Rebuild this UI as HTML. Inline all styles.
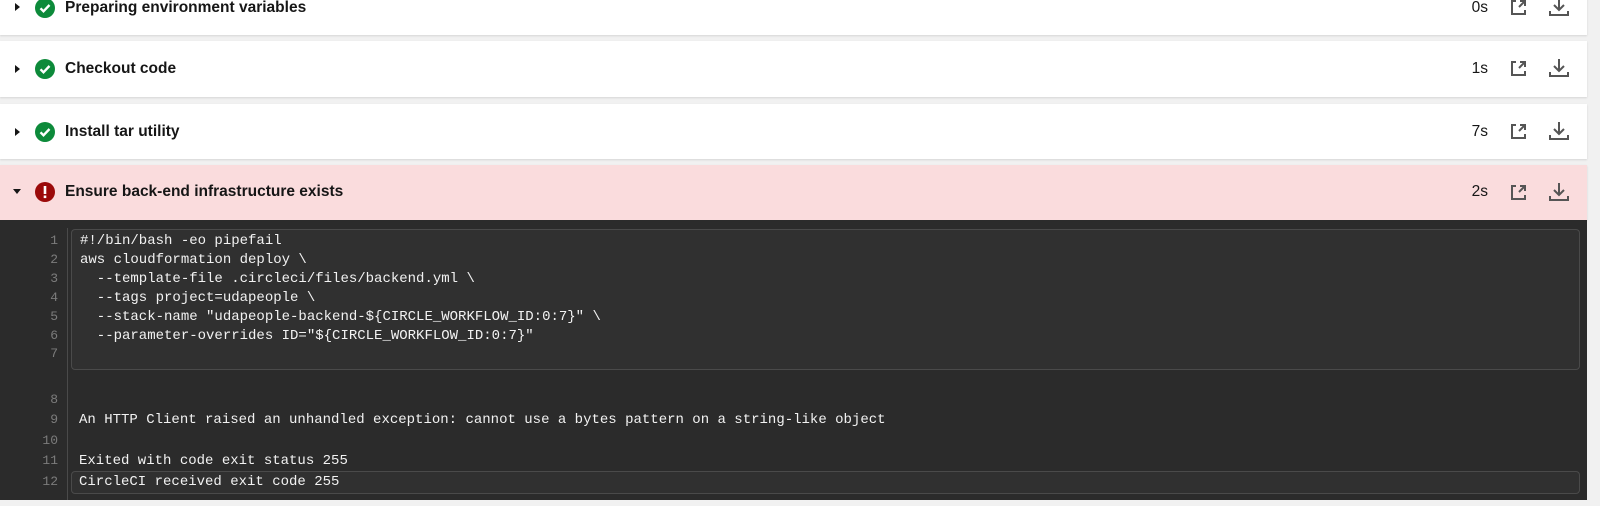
<!DOCTYPE html>
<html><head><style>
body{margin:0;width:1600px;height:506px;background:#f1f1f1;overflow:hidden;font-family:"Liberation Sans",sans-serif;position:relative}
.card{position:absolute;left:0;width:1587px;background:#fff;box-shadow:0 1px 2px rgba(0,0,0,.12)}
.card .t{position:absolute;left:65px;font-weight:bold;font-size:15.5px;color:#161616}
.tri{position:absolute;left:15px;width:0;height:0;border-top:4px solid transparent;border-bottom:4px solid transparent;border-left:5px solid #161616}
.ic{position:absolute;left:35px;width:20px;height:20px}
.dur{position:absolute;right:99px;font-size:15.5px;color:#161616}
.ext{position:absolute;left:1509px}
.dl{position:absolute;left:1549px}
.dark{position:absolute;left:0;top:220px;width:1587px;height:280px;background:#2b2b2b}
.code{font-family:"Liberation Mono",monospace;font-size:14px;color:#f2f2f2;white-space:pre}
.ln{position:absolute;width:58px;text-align:right;color:#7c7c7c;font-family:"Liberation Mono",monospace;font-size:13px}
.box{position:absolute;border:1px solid #4a4a4a;border-radius:4px;background:#303030}
</style></head><body>
<svg width="0" height="0" style="position:absolute"><defs>
<g id="ok"><circle cx="10" cy="10" r="10" fill="#0d8a3a"/><path d="M5.5 10.3l3 3 6-6.3" stroke="#fff" stroke-width="2.4" fill="none"/></g>
<g id="ex"><path d="M7 3H3v13h13v-4" stroke="#555" stroke-width="2" fill="none"/><path d="M10 9l6-6M11 3h5v5" stroke="#555" stroke-width="2" fill="none"/></g>
<g id="dn"><path d="M10 1v12M5 8l5 5 5-5" stroke="#555" stroke-width="2" fill="none"/><path d="M1 14v4h18v-4" stroke="#555" stroke-width="2" fill="none"/></g>
</defs></svg>

<div class="card" style="top:-20px;height:55px">
<div class="tri" style="top:23px"></div><svg class="ic" style="top:18px"><use href="#ok"/></svg>
<div class="t" style="top:19px">Preparing environment variables</div>
<div class="dur" style="top:19px">0s</div>
<svg class="ext" style="top:18px" width="20" height="20"><use href="#ex"/></svg><svg class="dl" style="top:17px" width="20" height="20"><use href="#dn"/></svg>
</div>
<div class="card" style="top:41px;height:56px">
<div class="tri" style="top:24px"></div><svg class="ic" style="top:18px"><use href="#ok"/></svg>
<div class="t" style="top:19px">Checkout code</div>
<div class="dur" style="top:19px">1s</div>
<svg class="ext" style="top:18px" width="20" height="20"><use href="#ex"/></svg><svg class="dl" style="top:17px" width="20" height="20"><use href="#dn"/></svg>
</div>
<div class="card" style="top:104px;height:55px">
<div class="tri" style="top:24px"></div><svg class="ic" style="top:18px"><use href="#ok"/></svg>
<div class="t" style="top:19px">Install tar utility</div>
<div class="dur" style="top:19px">7s</div>
<svg class="ext" style="top:18px" width="20" height="20"><use href="#ex"/></svg><svg class="dl" style="top:17px" width="20" height="20"><use href="#dn"/></svg>
</div>
<div class="card" style="top:165px;height:55px;background:#fadcdd">
<div class="tri" style="top:24px;border-left:4px solid transparent;border-right:4px solid transparent;border-top:5px solid #161616;border-bottom:0;left:13px"></div>
<svg class="ic" style="top:17px"><circle cx="10" cy="10" r="10" fill="#9b0a0a"/><rect x="8.7" y="4" width="2.6" height="8" fill="#fff"/><rect x="8.7" y="13.5" width="2.6" height="2.6" fill="#fff"/></svg>
<div class="t" style="top:18px">Ensure back-end infrastructure exists</div>
<div class="dur" style="top:18px">2s</div>
<svg class="ext" style="top:18px" width="20" height="20"><use href="#ex"/></svg><svg class="dl" style="top:17px" width="20" height="20"><use href="#dn"/></svg>
</div>
<div class="dark">
<div style="position:absolute;left:67px;top:8px;width:1px;height:272px;background:#4a4a4a"></div>
<div class="box" style="left:71px;top:9px;width:1507px;height:139px"></div>
<div class="box" style="left:71px;top:251px;width:1507px;height:21px"></div>
<div class="ln" style="top:12px;line-height:18.9px">1<br>2<br>3<br>4<br>5<br>6<br>7</div>
<div class="code" style="position:absolute;left:80px;top:12px;line-height:18.9px">#!/bin/bash -eo pipefail
aws cloudformation deploy \
  --template-file .circleci/files/backend.yml \
  --tags project=udapeople \
  --stack-name "udapeople-backend-${CIRCLE_WORKFLOW_ID:0:7}" \
  --parameter-overrides ID="${CIRCLE_WORKFLOW_ID:0:7}"</div>
<div class="ln" style="top:170px;line-height:20.4px">8<br>9<br>10<br>11<br>12</div>
<div class="code" style="position:absolute;left:79px;top:170px;line-height:20.4px">
An HTTP Client raised an unhandled exception: cannot use a bytes pattern on a string-like object

Exited with code exit status 255
CircleCI received exit code 255</div>
</div>
</body></html>
